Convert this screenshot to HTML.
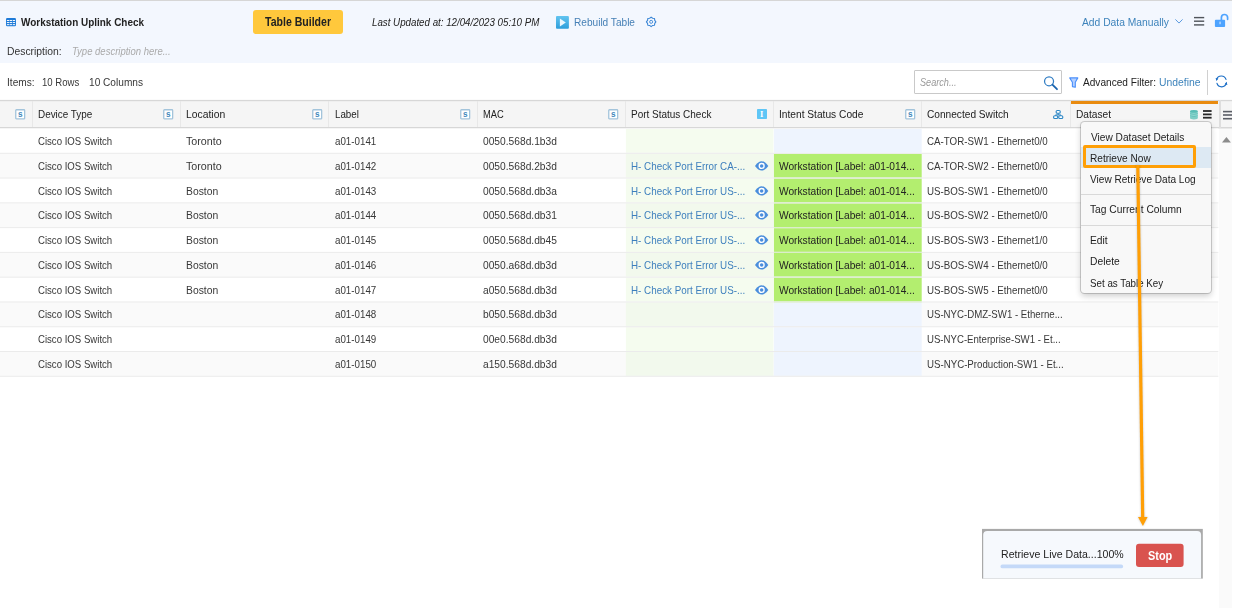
<!DOCTYPE html>
<html lang="en"><head><meta charset="utf-8"><title>Workstation Uplink Check</title>
<style>
html,body{margin:0;padding:0;}
body{width:1233px;height:608px;position:relative;overflow:hidden;background:#fff;font-family:"Liberation Sans",sans-serif;}
.a{position:absolute;}
.t{position:absolute;white-space:nowrap;line-height:20px;height:20px;transform-origin:0 50%;}
svg{position:absolute;overflow:visible;}
</style></head><body>

<div class="a" style="left:0;top:0;width:1232px;height:1.3px;background:#d6d6d6"></div>
<div class="a" style="left:0;top:1.3px;width:1232px;height:61.9px;background:#f3f7fe"></div>
<div class="a" style="left:252.7px;top:10px;width:90.3px;height:24.2px;background:#ffc83c;border-radius:3px"></div>
<div class="a" style="left:1219px;top:128px;width:13.3px;height:480px;background:#fafafa"></div>
<div class="a" style="left:914.2px;top:70.2px;width:145.7px;height:22.3px;border:1px solid #c9c9c9;background:#fff;border-radius:1px"></div>
<div class="a" style="left:1206.7px;top:70px;width:1px;height:24.5px;background:#d0d0d0"></div>
<svg style="left:0;top:0" width="1233" height="608"><rect x="0" y="100" width="1232" height="28" fill="#f5f5f5"/><rect x="0" y="99.9" width="1232" height="1.3" fill="#d7d7d7"/><rect x="0" y="127" width="1232" height="1.5" fill="#d7d7d7"/></svg>
<div class="a" style="left:31.7px;top:101.2px;width:1px;height:26px;background:#e8e8e8"></div>
<div class="a" style="left:179.8px;top:101.2px;width:1px;height:26px;background:#e8e8e8"></div>
<div class="a" style="left:327.9px;top:101.2px;width:1px;height:26px;background:#e8e8e8"></div>
<div class="a" style="left:476.8px;top:101.2px;width:1px;height:26px;background:#e8e8e8"></div>
<div class="a" style="left:625.1px;top:101.2px;width:1px;height:26px;background:#e8e8e8"></div>
<div class="a" style="left:773.1px;top:101.2px;width:1px;height:26px;background:#e8e8e8"></div>
<div class="a" style="left:921.3px;top:101.2px;width:1px;height:26px;background:#e8e8e8"></div>
<div class="a" style="left:1069.9px;top:101.2px;width:1px;height:26px;background:#e8e8e8"></div>
<div class="a" style="left:1219.3px;top:100.2px;width:1.7px;height:28px;background:#dedede"></div>
<div class="a" style="left:1070.6px;top:100.8px;width:147.4px;height:2.9px;background:#e98b10"></div>
<svg style="left:0;top:0" width="1233" height="608"><rect x="0" y="128.50" width="1218.3" height="24.78" fill="#ffffff"/><rect x="625.9" y="129.00" width="147.5" height="23.78" fill="#f5fcef"/><rect x="773.9" y="129.00" width="147.8" height="23.78" fill="#eef4fe"/><rect x="0" y="153.28" width="1218.3" height="24.78" fill="#fafafa"/><rect x="625.9" y="153.78" width="147.5" height="23.78" fill="#f2f9ed"/><rect x="773.9" y="153.78" width="147.8" height="23.78" fill="#b3ee6f"/><rect x="0" y="178.06" width="1218.3" height="24.78" fill="#ffffff"/><rect x="625.9" y="178.56" width="147.5" height="23.78" fill="#f5fcef"/><rect x="773.9" y="178.56" width="147.8" height="23.78" fill="#b3ee6f"/><rect x="0" y="202.84" width="1218.3" height="24.78" fill="#fafafa"/><rect x="625.9" y="203.34" width="147.5" height="23.78" fill="#f2f9ed"/><rect x="773.9" y="203.34" width="147.8" height="23.78" fill="#b3ee6f"/><rect x="0" y="227.62" width="1218.3" height="24.78" fill="#ffffff"/><rect x="625.9" y="228.12" width="147.5" height="23.78" fill="#f5fcef"/><rect x="773.9" y="228.12" width="147.8" height="23.78" fill="#b3ee6f"/><rect x="0" y="252.40" width="1218.3" height="24.78" fill="#fafafa"/><rect x="625.9" y="252.90" width="147.5" height="23.78" fill="#f2f9ed"/><rect x="773.9" y="252.90" width="147.8" height="23.78" fill="#b3ee6f"/><rect x="0" y="277.18" width="1218.3" height="24.78" fill="#ffffff"/><rect x="625.9" y="277.68" width="147.5" height="23.78" fill="#f5fcef"/><rect x="773.9" y="277.68" width="147.8" height="23.78" fill="#b3ee6f"/><rect x="0" y="301.96" width="1218.3" height="24.78" fill="#fafafa"/><rect x="625.9" y="302.46" width="147.5" height="23.78" fill="#f2f9ed"/><rect x="773.9" y="302.46" width="147.8" height="23.78" fill="#eef4fe"/><rect x="0" y="326.74" width="1218.3" height="24.78" fill="#ffffff"/><rect x="625.9" y="327.24" width="147.5" height="23.78" fill="#f5fcef"/><rect x="773.9" y="327.24" width="147.8" height="23.78" fill="#eef4fe"/><rect x="0" y="351.52" width="1218.3" height="24.78" fill="#fafafa"/><rect x="625.9" y="352.02" width="147.5" height="23.78" fill="#f2f9ed"/><rect x="773.9" y="352.02" width="147.8" height="23.78" fill="#eef4fe"/><rect x="0" y="152.78" width="1218.3" height="1" fill="#ebebeb"/><rect x="0" y="177.56" width="1218.3" height="1" fill="#ebebeb"/><rect x="773.9" y="177.56" width="147.8" height="1" fill="#d9edc8"/><rect x="0" y="202.34" width="1218.3" height="1" fill="#ebebeb"/><rect x="773.9" y="202.34" width="147.8" height="1" fill="#d9edc8"/><rect x="0" y="227.12" width="1218.3" height="1" fill="#ebebeb"/><rect x="773.9" y="227.12" width="147.8" height="1" fill="#d9edc8"/><rect x="0" y="251.90" width="1218.3" height="1" fill="#ebebeb"/><rect x="773.9" y="251.90" width="147.8" height="1" fill="#d9edc8"/><rect x="0" y="276.68" width="1218.3" height="1" fill="#ebebeb"/><rect x="773.9" y="276.68" width="147.8" height="1" fill="#d9edc8"/><rect x="0" y="301.46" width="1218.3" height="1" fill="#ebebeb"/><rect x="773.9" y="301.46" width="147.8" height="1" fill="#d9edc8"/><rect x="0" y="326.24" width="1218.3" height="1" fill="#ebebeb"/><rect x="0" y="351.02" width="1218.3" height="1" fill="#ebebeb"/><rect x="0" y="375.80" width="1218.3" height="1" fill="#ebebeb"/></svg>
<svg style="left:6.1px;top:17.9px" width="10" height="8.2" viewBox="0 0 10 8.2"><rect x="0" y="0" width="10" height="8.2" rx="1.3" fill="#1f7bd8"/><rect x="0.9" y="2.0" width="2.2" height="0.95" fill="#fff"/><rect x="3.6" y="2.0" width="2.6" height="0.95" fill="#fff"/><rect x="6.9" y="2.0" width="2.2" height="0.95" fill="#fff"/><rect x="0.9" y="4.1" width="2.2" height="0.95" fill="#fff"/><rect x="3.6" y="4.1" width="2.6" height="0.95" fill="#fff"/><rect x="6.9" y="4.1" width="2.2" height="0.95" fill="#fff"/><rect x="0.9" y="6.2" width="2.2" height="0.95" fill="#fff"/><rect x="3.6" y="6.2" width="2.6" height="0.95" fill="#fff"/><rect x="6.9" y="6.2" width="2.2" height="0.95" fill="#fff"/></svg>
<svg style="left:555.8px;top:15.6px" width="12.9" height="12.8" viewBox="0 0 12.9 12.8"><defs><linearGradient id="pg" x1="0" y1="0" x2="0" y2="1"><stop offset="0" stop-color="#62c4f0"/><stop offset="1" stop-color="#2d9edb"/></linearGradient></defs><rect width="12.9" height="12.8" rx="1" fill="url(#pg)"/><polygon points="3.9,2.6 9.8,6.5 3.9,10.4" fill="#eaf6fd"/></svg>
<svg style="left:646px;top:17.3px" width="10.3" height="9.7" viewBox="0 0 10.3 9.7"><path d="M5.15,0.10 L6.64,1.25 L8.51,1.49 L8.75,3.36 L9.90,4.85 L8.75,6.34 L8.51,8.21 L6.64,8.45 L5.15,9.60 L3.66,8.45 L1.79,8.21 L1.55,6.34 L0.40,4.85 L1.55,3.36 L1.79,1.49 L3.66,1.25Z" fill="none" stroke="#3a86d6" stroke-width="1.1" stroke-linejoin="round"/><circle cx="5.15" cy="4.85" r="1.5" fill="none" stroke="#3a86d6" stroke-width="0.9"/></svg>
<svg style="left:1174.9px;top:19.2px" width="8" height="4.7" viewBox="0 0 8 4.7"><polyline points="0.4,0.4 4,4.1 7.6,0.4" fill="none" stroke="#5a9be0" stroke-width="1"/></svg>
<svg style="left:0;top:0" width="1233" height="40"><rect x="1194" y="16.90" width="10.2" height="1.4" fill="#50555b"/><rect x="1194" y="20.50" width="10.2" height="1.4" fill="#50555b"/><rect x="1194" y="24.20" width="10.2" height="1.4" fill="#50555b"/></svg>
<svg style="left:1214px;top:13px" width="15" height="15" viewBox="0 0 15 15"><rect x="0.9" y="6.8" width="10.2" height="7.1" rx="0.9" fill="#4da3ff"/><path d="M7.4,7 V4.6 a3.1,3.1 0 0 1 6.2,0 V6.3" fill="none" stroke="#4da3ff" stroke-width="1.7" stroke-linecap="round"/><rect x="5.5" y="8.6" width="1.1" height="2.6" fill="#d8eaff"/></svg>
<svg style="left:1043px;top:75px" width="16" height="16" viewBox="0 0 16 16"><circle cx="6.05" cy="6.25" r="4.5" fill="none" stroke="#2f7cc3" stroke-width="1.25"/><line x1="9.4" y1="9.6" x2="14" y2="14.2" stroke="#1b64ae" stroke-width="1.8" stroke-linecap="round"/></svg>
<svg style="left:1069px;top:76.5px" width="10" height="11" viewBox="0 0 10 11"><path d="M0.7,0.9 H8.8 L6.3,5.2 V10.2 L3.4,9.6 V5.2 Z" fill="#b4d0ff" stroke="#4a8ffb" stroke-width="1.1" stroke-linejoin="round"/></svg>
<svg style="left:1215px;top:75px" width="13" height="13" viewBox="0 0 13 13"><g fill="none" stroke="#1d6fc6" stroke-width="1.2" stroke-linecap="round"><path d="M1.6,4.6 A4.9,4.9 0 0 1 11.0,4.4"/><path d="M11.4,8.2 A4.9,4.9 0 0 1 2.0,8.4"/></g><polygon points="0.6,2.9 3.4,3.6 1.4,6.0" fill="#1d6fc6"/><polygon points="12.4,9.9 9.6,9.2 11.6,6.8" fill="#1d6fc6"/></svg>
<svg style="left:15.0px;top:108.9px" width="10.8" height="10.8" viewBox="0 0 10.8 10.8"><rect x="0.75" y="0.75" width="8.9" height="9.1" rx="0.7" fill="#fff" stroke="#a3c4db" stroke-width="1.3"/><text transform="translate(5.25,8.1) scale(0.84,1)" text-anchor="middle" font-family="Liberation Sans, sans-serif" font-size="9.8" font-weight="bold" fill="#4288ba">s</text></svg>
<svg style="left:163.1px;top:108.9px" width="10.8" height="10.8" viewBox="0 0 10.8 10.8"><rect x="0.75" y="0.75" width="8.9" height="9.1" rx="0.7" fill="#fff" stroke="#a3c4db" stroke-width="1.3"/><text transform="translate(5.25,8.1) scale(0.84,1)" text-anchor="middle" font-family="Liberation Sans, sans-serif" font-size="9.8" font-weight="bold" fill="#4288ba">s</text></svg>
<svg style="left:311.5px;top:108.9px" width="10.8" height="10.8" viewBox="0 0 10.8 10.8"><rect x="0.75" y="0.75" width="8.9" height="9.1" rx="0.7" fill="#fff" stroke="#a3c4db" stroke-width="1.3"/><text transform="translate(5.25,8.1) scale(0.84,1)" text-anchor="middle" font-family="Liberation Sans, sans-serif" font-size="9.8" font-weight="bold" fill="#4288ba">s</text></svg>
<svg style="left:460.0px;top:108.9px" width="10.8" height="10.8" viewBox="0 0 10.8 10.8"><rect x="0.75" y="0.75" width="8.9" height="9.1" rx="0.7" fill="#fff" stroke="#a3c4db" stroke-width="1.3"/><text transform="translate(5.25,8.1) scale(0.84,1)" text-anchor="middle" font-family="Liberation Sans, sans-serif" font-size="9.8" font-weight="bold" fill="#4288ba">s</text></svg>
<svg style="left:608.2px;top:108.9px" width="10.8" height="10.8" viewBox="0 0 10.8 10.8"><rect x="0.75" y="0.75" width="8.9" height="9.1" rx="0.7" fill="#fff" stroke="#a3c4db" stroke-width="1.3"/><text transform="translate(5.25,8.1) scale(0.84,1)" text-anchor="middle" font-family="Liberation Sans, sans-serif" font-size="9.8" font-weight="bold" fill="#4288ba">s</text></svg>
<svg style="left:905.0px;top:108.9px" width="10.8" height="10.8" viewBox="0 0 10.8 10.8"><rect x="0.75" y="0.75" width="8.9" height="9.1" rx="0.7" fill="#fff" stroke="#a3c4db" stroke-width="1.3"/><text transform="translate(5.25,8.1) scale(0.84,1)" text-anchor="middle" font-family="Liberation Sans, sans-serif" font-size="9.8" font-weight="bold" fill="#4288ba">s</text></svg>
<div class="a" style="left:756.8px;top:109.4px;width:9.9px;height:9.6px;background:#5fc6f6;border-radius:0.8px"></div>
<span class="a" style="left:759.9px;top:107.3px;font-family:'Liberation Serif',serif;font-size:8.5px;font-weight:bold;color:#fff;line-height:14px">I</span>
<svg style="left:1052.9px;top:109.9px" width="10.4" height="9.1" viewBox="0 0 10.4 9.1"><g fill="#fff" stroke="#2b86c5" stroke-width="1.1"><rect x="3.1" y="0.55" width="4.2" height="2.7" rx="1.3"/><rect x="0.55" y="5.75" width="4.2" height="2.8" rx="1.3"/><rect x="5.65" y="5.75" width="4.2" height="2.8" rx="1.3"/></g><path d="M5.2,3.3 V5.0 M2.6,5.6 V4.9 H7.8 V5.6" fill="none" stroke="#2b86c5" stroke-width="1"/></svg>
<svg style="left:1190.2px;top:109.6px" width="7.8" height="9.4" viewBox="0 0 7.8 9.4"><rect x="0" y="1.2" width="7.8" height="7" fill="#8fd4cd"/><ellipse cx="3.9" cy="8.1" rx="3.9" ry="1.3" fill="#7fcdc5"/><ellipse cx="3.9" cy="1.4" rx="3.9" ry="1.4" fill="#58bdb5"/><path d="M0,3.6 Q3.9,5.2 7.8,3.6 M0,5.8 Q3.9,7.4 7.8,5.8" fill="none" stroke="#5fc2ba" stroke-width="0.9"/></svg>
<svg style="left:0;top:0" width="1233" height="130"><rect x="1203" y="110.10" width="8.6" height="1.8" fill="#262626"/><rect x="1203" y="113.50" width="8.6" height="1.8" fill="#262626"/><rect x="1203" y="116.80" width="8.6" height="1.8" fill="#262626"/><rect x="1223" y="110.80" width="9" height="1.6" fill="#5a5e66"/><rect x="1223" y="114.20" width="9" height="1.6" fill="#5a5e66"/><rect x="1223" y="117.90" width="9" height="1.6" fill="#5a5e66"/></svg>
<svg style="left:1222.1px;top:137.1px" width="8.9" height="5.4" viewBox="0 0 8.9 5.4"><polygon points="4.45,0 8.9,5.4 0,5.4" fill="#8c8c8c"/></svg>
<svg style="left:755px;top:160.87px" width="13.3" height="9.8" viewBox="0 0 13.3 9.8"><path d="M0,4.9 Q6.65,-4.2 13.3,4.9 Q6.65,14 0,4.9Z" fill="#4a8edc"/><circle cx="6.65" cy="4.9" r="3.1" fill="#fff"/><circle cx="6.65" cy="4.9" r="1.75" fill="#4a8edc"/></svg>
<svg style="left:755px;top:185.65px" width="13.3" height="9.8" viewBox="0 0 13.3 9.8"><path d="M0,4.9 Q6.65,-4.2 13.3,4.9 Q6.65,14 0,4.9Z" fill="#4a8edc"/><circle cx="6.65" cy="4.9" r="3.1" fill="#fff"/><circle cx="6.65" cy="4.9" r="1.75" fill="#4a8edc"/></svg>
<svg style="left:755px;top:210.43px" width="13.3" height="9.8" viewBox="0 0 13.3 9.8"><path d="M0,4.9 Q6.65,-4.2 13.3,4.9 Q6.65,14 0,4.9Z" fill="#4a8edc"/><circle cx="6.65" cy="4.9" r="3.1" fill="#fff"/><circle cx="6.65" cy="4.9" r="1.75" fill="#4a8edc"/></svg>
<svg style="left:755px;top:235.21px" width="13.3" height="9.8" viewBox="0 0 13.3 9.8"><path d="M0,4.9 Q6.65,-4.2 13.3,4.9 Q6.65,14 0,4.9Z" fill="#4a8edc"/><circle cx="6.65" cy="4.9" r="3.1" fill="#fff"/><circle cx="6.65" cy="4.9" r="1.75" fill="#4a8edc"/></svg>
<svg style="left:755px;top:259.99px" width="13.3" height="9.8" viewBox="0 0 13.3 9.8"><path d="M0,4.9 Q6.65,-4.2 13.3,4.9 Q6.65,14 0,4.9Z" fill="#4a8edc"/><circle cx="6.65" cy="4.9" r="3.1" fill="#fff"/><circle cx="6.65" cy="4.9" r="1.75" fill="#4a8edc"/></svg>
<svg style="left:755px;top:284.77px" width="13.3" height="9.8" viewBox="0 0 13.3 9.8"><path d="M0,4.9 Q6.65,-4.2 13.3,4.9 Q6.65,14 0,4.9Z" fill="#4a8edc"/><circle cx="6.65" cy="4.9" r="3.1" fill="#fff"/><circle cx="6.65" cy="4.9" r="1.75" fill="#4a8edc"/></svg>
<div class="a" style="left:1080.5px;top:121.6px;width:130px;height:171.6px;background:#f8f8f8;border-radius:3.5px;box-shadow:0 0 0 1px rgba(0,0,0,0.16),0 3px 6px rgba(0,0,0,0.20)"></div>
<div class="a" style="left:1081px;top:147.3px;width:129.5px;height:21px;background:#dde9f3"></div>
<div class="a" style="left:1081px;top:194.1px;width:129.5px;height:1px;background:#d9d9d9"></div>
<div class="a" style="left:1081px;top:225px;width:129.5px;height:1px;background:#d9d9d9"></div>
<svg style="left:0;top:0" width="1233" height="608"><rect x="982" y="528.9" width="220.8" height="49.7" fill="#a9a9a9"/><path d="M983.2,578.6 V534.9 a4,4 0 0 1 4,-4 H1197.1 a4,4 0 0 1 4,4 V578.6 Z" fill="#f6f9fd"/><rect x="1000.5" y="564.4" width="122.6" height="3.9" rx="1.9" fill="#c4d9f8"/><rect x="1136" y="543.7" width="47.6" height="23.2" rx="3" fill="#d9534f"/></svg>
<div class="g header">
<span class="t" id="t0" style="left:21.00px;top:11.70px;font-size:11px;color:#222;font-weight:bold;transform:scaleX(0.9037);">Workstation Uplink Check</span>
<span class="t" id="t1" style="left:265.00px;top:11.70px;font-size:12px;color:#222;font-weight:bold;transform:scaleX(0.8785);">Table Builder</span>
<span class="t" id="t2" style="left:371.70px;top:11.70px;font-size:10.5px;color:#222;font-style:italic;transform:scaleX(0.9274);">Last Updated at: 12/04/2023 05:10 PM</span>
<span class="t" id="t3" style="left:574.00px;top:11.70px;font-size:11px;color:#4680b6;transform:scaleX(0.9177);">Rebuild Table</span>
<span class="t" id="t4" style="left:1082.00px;top:11.70px;font-size:11px;color:#3d83bb;transform:scaleX(0.9360);">Add Data Manually</span>
</div>
<div class="g description">
<span class="t" id="t5" style="left:6.60px;top:40.50px;font-size:11px;color:#333;transform:scaleX(0.9401);">Description:</span>
<span class="t" id="t6" style="left:72.40px;top:40.50px;font-size:10.5px;color:#aaa;font-style:italic;transform:scaleX(0.9050);">Type description here...</span>
</div>
<div class="g toolbar">
<span class="t" id="t7" style="left:6.60px;top:71.80px;font-size:11px;color:#383838;transform:scaleX(0.9214);">Items:</span>
<span class="t" id="t8" style="left:42.00px;top:71.80px;font-size:11px;color:#383838;transform:scaleX(0.8716);">10 Rows</span>
<span class="t" id="t9" style="left:88.80px;top:71.80px;font-size:11px;color:#383838;transform:scaleX(0.9199);">10 Columns</span>
<span class="t" id="t10" style="left:920.00px;top:72.30px;font-size:10.5px;color:#999;font-style:italic;transform:scaleX(0.8684);">Search...</span>
<span class="t" id="t11" style="left:1083.00px;top:72.30px;font-size:11px;color:#222;transform:scaleX(0.9184);">Advanced Filter:</span>
<span class="t" id="t12" style="left:1158.50px;top:72.30px;font-size:11px;color:#3d83bb;transform:scaleX(0.9422);">Undefine</span>
</div>
<div class="g thead">
<span class="t" id="t13" style="left:37.70px;top:104.30px;font-size:11px;color:#222;transform:scaleX(0.9001);">Device Type</span>
<span class="t" id="t14" style="left:185.80px;top:104.30px;font-size:11px;color:#222;transform:scaleX(0.9424);">Location</span>
<span class="t" id="t15" style="left:334.50px;top:104.30px;font-size:11px;color:#222;transform:scaleX(0.8878);">Label</span>
<span class="t" id="t16" style="left:482.50px;top:104.30px;font-size:11px;color:#222;transform:scaleX(0.8465);">MAC</span>
<span class="t" id="t17" style="left:630.80px;top:104.30px;font-size:11px;color:#222;transform:scaleX(0.9069);">Port Status Check</span>
<span class="t" id="t18" style="left:779.20px;top:104.30px;font-size:11px;color:#222;transform:scaleX(0.9262);">Intent Status Code</span>
<span class="t" id="t19" style="left:927.30px;top:104.30px;font-size:11px;color:#222;transform:scaleX(0.9214);">Connected Switch</span>
<span class="t" id="t20" style="left:1075.70px;top:104.30px;font-size:11px;color:#222;transform:scaleX(0.9256);">Dataset</span>
</div>
<div class="g row">
<span class="t" id="t21" style="left:37.90px;top:130.99px;font-size:11px;color:#383838;transform:scaleX(0.8733);">Cisco IOS Switch</span>
<span class="t" id="t22" style="left:185.80px;top:130.99px;font-size:11px;color:#383838;transform:scaleX(0.9727);">Toronto</span>
<span class="t" id="t23" style="left:334.50px;top:130.99px;font-size:11px;color:#383838;transform:scaleX(0.8882);">a01-0141</span>
<span class="t" id="t24" style="left:482.50px;top:130.99px;font-size:11px;color:#383838;transform:scaleX(0.9292);">0050.568d.1b3d</span>
<span class="t" id="t25" style="left:927.30px;top:130.99px;font-size:11px;color:#383838;transform:scaleX(0.8867);">CA-TOR-SW1 - Ethernet0/0</span>
</div>
<div class="g row">
<span class="t" id="t26" style="left:37.90px;top:155.77px;font-size:11px;color:#383838;transform:scaleX(0.8733);">Cisco IOS Switch</span>
<span class="t" id="t27" style="left:185.80px;top:155.77px;font-size:11px;color:#383838;transform:scaleX(0.9727);">Toronto</span>
<span class="t" id="t28" style="left:334.50px;top:155.77px;font-size:11px;color:#383838;transform:scaleX(0.8882);">a01-0142</span>
<span class="t" id="t29" style="left:482.50px;top:155.77px;font-size:11px;color:#383838;transform:scaleX(0.9292);">0050.568d.2b3d</span>
<span class="t" id="t30" style="left:630.80px;top:155.77px;font-size:11px;color:#3d7fbd;transform:scaleX(0.8939);">H- Check Port Error CA-...</span>
<span class="t" id="t31" style="left:779.20px;top:155.77px;font-size:11px;color:#222;transform:scaleX(0.9266);">Workstation [Label: a01-014...</span>
<span class="t" id="t32" style="left:927.30px;top:155.77px;font-size:11px;color:#383838;transform:scaleX(0.8867);">CA-TOR-SW2 - Ethernet0/0</span>
</div>
<div class="g row">
<span class="t" id="t33" style="left:37.90px;top:180.55px;font-size:11px;color:#383838;transform:scaleX(0.8733);">Cisco IOS Switch</span>
<span class="t" id="t34" style="left:185.80px;top:180.55px;font-size:11px;color:#383838;transform:scaleX(0.9401);">Boston</span>
<span class="t" id="t35" style="left:334.50px;top:180.55px;font-size:11px;color:#383838;transform:scaleX(0.8882);">a01-0143</span>
<span class="t" id="t36" style="left:482.50px;top:180.55px;font-size:11px;color:#383838;transform:scaleX(0.9292);">0050.568d.db3a</span>
<span class="t" id="t37" style="left:630.80px;top:180.55px;font-size:11px;color:#3d7fbd;transform:scaleX(0.8939);">H- Check Port Error US-...</span>
<span class="t" id="t38" style="left:779.20px;top:180.55px;font-size:11px;color:#222;transform:scaleX(0.9266);">Workstation [Label: a01-014...</span>
<span class="t" id="t39" style="left:927.30px;top:180.55px;font-size:11px;color:#383838;transform:scaleX(0.8854);">US-BOS-SW1 - Ethernet0/0</span>
</div>
<div class="g row">
<span class="t" id="t40" style="left:37.90px;top:205.33px;font-size:11px;color:#383838;transform:scaleX(0.8733);">Cisco IOS Switch</span>
<span class="t" id="t41" style="left:185.80px;top:205.33px;font-size:11px;color:#383838;transform:scaleX(0.9401);">Boston</span>
<span class="t" id="t42" style="left:334.50px;top:205.33px;font-size:11px;color:#383838;transform:scaleX(0.8882);">a01-0144</span>
<span class="t" id="t43" style="left:482.50px;top:205.33px;font-size:11px;color:#383838;transform:scaleX(0.9292);">0050.568d.db31</span>
<span class="t" id="t44" style="left:630.80px;top:205.33px;font-size:11px;color:#3d7fbd;transform:scaleX(0.8939);">H- Check Port Error US-...</span>
<span class="t" id="t45" style="left:779.20px;top:205.33px;font-size:11px;color:#222;transform:scaleX(0.9266);">Workstation [Label: a01-014...</span>
<span class="t" id="t46" style="left:927.30px;top:205.33px;font-size:11px;color:#383838;transform:scaleX(0.8854);">US-BOS-SW2 - Ethernet0/0</span>
</div>
<div class="g row">
<span class="t" id="t47" style="left:37.90px;top:230.11px;font-size:11px;color:#383838;transform:scaleX(0.8733);">Cisco IOS Switch</span>
<span class="t" id="t48" style="left:185.80px;top:230.11px;font-size:11px;color:#383838;transform:scaleX(0.9401);">Boston</span>
<span class="t" id="t49" style="left:334.50px;top:230.11px;font-size:11px;color:#383838;transform:scaleX(0.8882);">a01-0145</span>
<span class="t" id="t50" style="left:482.50px;top:230.11px;font-size:11px;color:#383838;transform:scaleX(0.9292);">0050.568d.db45</span>
<span class="t" id="t51" style="left:630.80px;top:230.11px;font-size:11px;color:#3d7fbd;transform:scaleX(0.8939);">H- Check Port Error US-...</span>
<span class="t" id="t52" style="left:779.20px;top:230.11px;font-size:11px;color:#222;transform:scaleX(0.9266);">Workstation [Label: a01-014...</span>
<span class="t" id="t53" style="left:927.30px;top:230.11px;font-size:11px;color:#383838;transform:scaleX(0.8854);">US-BOS-SW3 - Ethernet1/0</span>
</div>
<div class="g row">
<span class="t" id="t54" style="left:37.90px;top:254.89px;font-size:11px;color:#383838;transform:scaleX(0.8733);">Cisco IOS Switch</span>
<span class="t" id="t55" style="left:185.80px;top:254.89px;font-size:11px;color:#383838;transform:scaleX(0.9401);">Boston</span>
<span class="t" id="t56" style="left:334.50px;top:254.89px;font-size:11px;color:#383838;transform:scaleX(0.8882);">a01-0146</span>
<span class="t" id="t57" style="left:482.50px;top:254.89px;font-size:11px;color:#383838;transform:scaleX(0.9292);">0050.a68d.db3d</span>
<span class="t" id="t58" style="left:630.80px;top:254.89px;font-size:11px;color:#3d7fbd;transform:scaleX(0.8939);">H- Check Port Error US-...</span>
<span class="t" id="t59" style="left:779.20px;top:254.89px;font-size:11px;color:#222;transform:scaleX(0.9266);">Workstation [Label: a01-014...</span>
<span class="t" id="t60" style="left:927.30px;top:254.89px;font-size:11px;color:#383838;transform:scaleX(0.8854);">US-BOS-SW4 - Ethernet0/0</span>
</div>
<div class="g row">
<span class="t" id="t61" style="left:37.90px;top:279.67px;font-size:11px;color:#383838;transform:scaleX(0.8733);">Cisco IOS Switch</span>
<span class="t" id="t62" style="left:185.80px;top:279.67px;font-size:11px;color:#383838;transform:scaleX(0.9401);">Boston</span>
<span class="t" id="t63" style="left:334.50px;top:279.67px;font-size:11px;color:#383838;transform:scaleX(0.8882);">a01-0147</span>
<span class="t" id="t64" style="left:482.50px;top:279.67px;font-size:11px;color:#383838;transform:scaleX(0.9292);">a050.568d.db3d</span>
<span class="t" id="t65" style="left:630.80px;top:279.67px;font-size:11px;color:#3d7fbd;transform:scaleX(0.8939);">H- Check Port Error US-...</span>
<span class="t" id="t66" style="left:779.20px;top:279.67px;font-size:11px;color:#222;transform:scaleX(0.9266);">Workstation [Label: a01-014...</span>
<span class="t" id="t67" style="left:927.30px;top:279.67px;font-size:11px;color:#383838;transform:scaleX(0.8854);">US-BOS-SW5 - Ethernet0/0</span>
</div>
<div class="g row">
<span class="t" id="t68" style="left:37.90px;top:304.45px;font-size:11px;color:#383838;transform:scaleX(0.8733);">Cisco IOS Switch</span>
<span class="t" id="t69" style="left:334.50px;top:304.45px;font-size:11px;color:#383838;transform:scaleX(0.8882);">a01-0148</span>
<span class="t" id="t70" style="left:482.50px;top:304.45px;font-size:11px;color:#383838;transform:scaleX(0.9292);">b050.568d.db3d</span>
<span class="t" id="t71" style="left:927.30px;top:304.45px;font-size:11px;color:#383838;transform:scaleX(0.8775);">US-NYC-DMZ-SW1 - Etherne...</span>
</div>
<div class="g row">
<span class="t" id="t72" style="left:37.90px;top:329.23px;font-size:11px;color:#383838;transform:scaleX(0.8733);">Cisco IOS Switch</span>
<span class="t" id="t73" style="left:334.50px;top:329.23px;font-size:11px;color:#383838;transform:scaleX(0.8882);">a01-0149</span>
<span class="t" id="t74" style="left:482.50px;top:329.23px;font-size:11px;color:#383838;transform:scaleX(0.9292);">00e0.568d.db3d</span>
<span class="t" id="t75" style="left:927.30px;top:329.23px;font-size:11px;color:#383838;transform:scaleX(0.8749);">US-NYC-Enterprise-SW1 - Et...</span>
</div>
<div class="g row">
<span class="t" id="t76" style="left:37.90px;top:354.01px;font-size:11px;color:#383838;transform:scaleX(0.8733);">Cisco IOS Switch</span>
<span class="t" id="t77" style="left:334.50px;top:354.01px;font-size:11px;color:#383838;transform:scaleX(0.8882);">a01-0150</span>
<span class="t" id="t78" style="left:482.50px;top:354.01px;font-size:11px;color:#383838;transform:scaleX(0.9292);">a150.568d.db3d</span>
<span class="t" id="t79" style="left:927.30px;top:354.01px;font-size:11px;color:#383838;transform:scaleX(0.8804);">US-NYC-Production-SW1 - Et...</span>
</div>
<div class="g menu">
<span class="t" id="t80" style="left:1090.50px;top:126.60px;font-size:11px;color:#222;transform:scaleX(0.9220);">View Dataset Details</span>
<span class="t" id="t81" style="left:1090.30px;top:147.80px;font-size:11px;color:#222;transform:scaleX(0.9193);">Retrieve Now</span>
<span class="t" id="t82" style="left:1090.30px;top:168.80px;font-size:11px;color:#222;transform:scaleX(0.9161);">View Retrieve Data Log</span>
<span class="t" id="t83" style="left:1090.30px;top:199.40px;font-size:11px;color:#222;transform:scaleX(0.9316);">Tag Current Column</span>
<span class="t" id="t84" style="left:1090.30px;top:229.60px;font-size:11px;color:#222;transform:scaleX(0.9331);">Edit</span>
<span class="t" id="t85" style="left:1090.30px;top:251.10px;font-size:11px;color:#222;transform:scaleX(0.9341);">Delete</span>
<span class="t" id="t86" style="left:1090.30px;top:273.00px;font-size:11px;color:#222;transform:scaleX(0.8888);">Set as Table Key</span>
</div>
<div class="g progress">
<span class="t" id="t87" style="left:1000.60px;top:543.50px;font-size:11.5px;color:#222;transform:scaleX(0.9183);">Retrieve Live Data...100%</span>
<span class="t" id="t88" style="left:1148.30px;top:545.60px;font-size:12px;color:#fff;font-weight:bold;transform:scaleX(0.9111);">Stop</span>
</div>
<div class="a" style="left:1083px;top:145.2px;width:107px;height:16.6px;border:3px solid #ff9f06;border-radius:2px"></div>
<svg style="left:0;top:0;filter:drop-shadow(0.8px 0.8px 1.2px rgba(0,0,0,0.22))" width="1233" height="608"><line x1="1137.8" y1="165" x2="1142.7" y2="518" stroke="#ff9f06" stroke-width="3.2"/><polygon points="1138,517 1147.6,517 1142.9,526" fill="#ff9f06"/></svg>
</body></html>
